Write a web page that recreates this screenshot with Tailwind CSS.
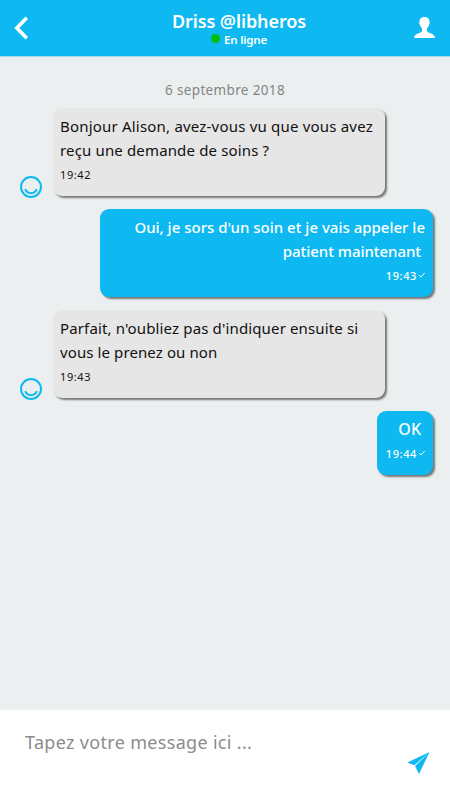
<!DOCTYPE html>
<html lang="fr">
<head>
    <meta charset="UTF-8">
    <meta name="viewport" content="width=device-width, initial-scale=1.0">
    <title>Messagerie</title>
    <script src="https://cdn.jsdelivr.net/npm/@tailwindcss/browser@4"></script>
</head>
<body class="bg-[#ebeff0] font-['Noto_Sans',sans-serif]">
<div class="h-[800px] w-[450px] flex flex-col overflow-hidden">
    <!-- En-tête -->
    <header class="h-[57px] shrink-0 bg-[#0db9f0] border-b border-[#a5d9ee] flex justify-between text-white">
        <button class="w-14 pl-[14px]" aria-label="Retour">
            <svg class="w-[15px] h-6" viewBox="0 0 15 24" fill="none" stroke="#fff" stroke-width="3.6"><path d="M12.8 1.8L2.8 12L12.8 22.2"/></svg>
        </button>
        <div class="flex flex-col items-center pt-[9px] pl-[28px]">
            <h1 class="text-[18px] leading-6 font-semibold tracking-[-0.1px] whitespace-nowrap">Driss @libheros</h1>
            <p class="flex items-center gap-1 text-[11.5px] leading-[14px] font-semibold tracking-[-0.2px] whitespace-nowrap"><span class="w-[9px] h-[9px] -mt-1 rounded-full bg-[#04bd0c]"></span>En ligne</p>
        </div>
        <button class="w-14 flex justify-end pr-[15px] pt-[17px]" aria-label="Profil">
            <svg class="w-[21px] h-[21px]" viewBox="0 0 21 21" fill="#fff"><path d="M10.5 0C7 0 5.3 2.2 5.5 5.2C5 5.5 5.4 7.8 6.1 8.1C6.5 9.8 7.5 11 8 11.6V14.2C7.5 16 0 16.2 0 21H21C21 16.2 13.5 16 13 14.2V11.6C13.6 11 14.5 9.8 14.9 8.1C15.6 7.8 16 5.5 15.5 5.2C15.7 2.2 14 0 10.5 0Z"/></svg>
        </button>
    </header>

    <!-- Conversation -->
    <main class="grow pt-[21px] pl-5 pr-[17px] text-[15px] leading-6 text-[#111] whitespace-nowrap">
        <p class="text-center text-[13.5px] text-[#858585] tracking-[0.35px] pr-[3px] mb-[6px]">6 septembre 2018</p>
        <div class="flex flex-col gap-[13px]">
            <div class="flex items-end gap-[11px]">
                <svg class="w-[22px] h-[22px] -mb-[2px] shrink-0" viewBox="0 0 22 22" fill="none" stroke="#0db9f0" stroke-width="2"><circle cx="11" cy="11" r="10"/><path d="M5.2 13.2C7.5 18.6 14.5 18.6 16.8 13.2"/></svg>
                <div class="w-[332px] h-[88px] px-[7px] pt-[6px] rounded-[9px] bg-[#e6e6e6] shadow-[2px_2px_2px_#777]">
                    <p class="tracking-[0.2px]">Bonjour Alison, avez-vous vu que vous avez</p>
                    <p class="tracking-[0.15px]">reçu une demande de soins ?</p>
                    <p class="pt-px text-[11px] tracking-[0.6px]">19:42</p>
                </div>
            </div>
            <div class="w-[333px] h-[88px] self-end px-2 pt-[6px] rounded-[9px] bg-[#0db9f0] shadow-[2px_2px_2px_#777] text-white text-right font-medium">
                <p>Oui, je sors d'un soin et je vais appeler le</p>
                <p class="pr-1 tracking-[-0.05px]">patient maintenant</p>
                <p class="pt-px flex justify-end items-center gap-[2px] text-[11px] tracking-[0.6px]">19:43<svg class="w-[6px] h-[6px] -mt-[3px]" viewBox="0 0 6 6" fill="none" stroke="#fff"><path d="M0.2 3.2L2 5L5.8 0.8"/></svg></p>
            </div>
            <div class="flex items-end gap-[11px]">
                <svg class="w-[22px] h-[22px] -mb-[2px] shrink-0" viewBox="0 0 22 22" fill="none" stroke="#0db9f0" stroke-width="2"><circle cx="11" cy="11" r="10"/><path d="M5.2 13.2C7.5 18.6 14.5 18.6 16.8 13.2"/></svg>
                <div class="w-[332px] h-[88px] px-[7px] pt-[6px] rounded-[9px] bg-[#e6e6e6] shadow-[2px_2px_2px_#777]">
                    <p class="tracking-[0.14px]">Parfait, n'oubliez pas d'indiquer ensuite si</p>
                    <p class="tracking-[0.1px]">vous le prenez ou non</p>
                    <p class="pt-px text-[11px] tracking-[0.6px]">19:43</p>
                </div>
            </div>
            <div class="w-14 h-16 self-end px-2 pt-[6px] rounded-[9px] bg-[#0db9f0] shadow-[2px_2px_2px_#777] text-white text-right font-medium">
                <p class="pr-1 text-[16px]">OK</p>
                <p class="pt-px flex justify-end items-center gap-[2px] text-[11px] tracking-[0.6px]">19:44<svg class="w-[6px] h-[6px] -mt-[3px]" viewBox="0 0 6 6" fill="none" stroke="#fff"><path d="M0.2 3.2L2 5L5.8 0.8"/></svg></p>
            </div>
        </div>
    </main>

    <!-- Saisie du message -->
    <footer class="h-[90px] shrink-0 bg-white flex justify-between pl-[25px] pr-5">
        <p class="pt-[20px] text-[18px] leading-6 tracking-[0.32px] text-[#8c8c8c]">Tapez votre message ici ...</p>
        <button class="self-start pt-[42px]" aria-label="Envoyer">
            <svg class="w-[23px] h-[22px]" viewBox="0 0 23 22" fill="#0db9f0"><path d="M22.5 0L0.3 10.6L7.3 13.3ZM22.5 0L8.2 14V14.4L12 22Z"/></svg>
        </button>
    </footer>
</div>
</body>
</html>
